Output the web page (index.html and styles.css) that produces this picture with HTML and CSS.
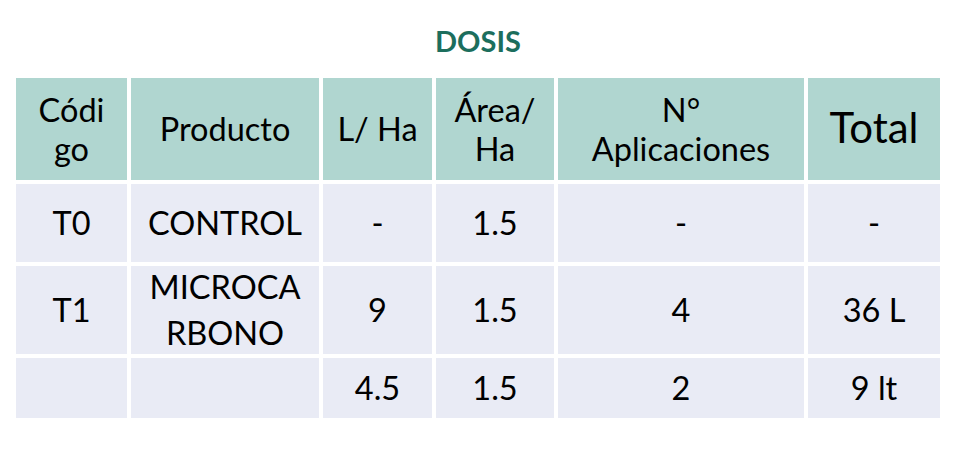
FILE: index.html
```html
<!DOCTYPE html>
<html lang="es">
<head>
<meta charset="utf-8">
<title>Dosis</title>
<link rel="stylesheet" href="styles.css">
</head>
<body>
<div class="page">
  <div class="title">DOSIS</div>
  <div class="grid">
    <div class="cell head">Códi<br>go</div>
    <div class="cell head">Producto</div>
    <div class="cell head">L/ Ha</div>
    <div class="cell head">Área/<br>Ha</div>
    <div class="cell head">N°<br>Aplicaciones</div>
    <div class="cell head big">Total</div>

    <div class="cell">T0</div>
    <div class="cell">CONTROL</div>
    <div class="cell">-</div>
    <div class="cell">1.5</div>
    <div class="cell">-</div>
    <div class="cell">-</div>

    <div class="cell">T1</div>
    <div class="cell tall">MICROCA<br>RBONO</div>
    <div class="cell">9</div>
    <div class="cell">1.5</div>
    <div class="cell">4</div>
    <div class="cell">36 L</div>

    <div class="cell"></div>
    <div class="cell"></div>
    <div class="cell">4.5</div>
    <div class="cell">1.5</div>
    <div class="cell">2</div>
    <div class="cell">9 lt</div>
  </div>
</div>
</body>
</html>
```

FILE: styles.css
```css
html, body {
  margin: 0;
  padding: 0;
  background: #ffffff;
}

.page {
  padding-left: 16px;
  width: 924px;
  font-family: Lato, "Open Sans", sans-serif;
  color: #000000;
}

.title {
  box-sizing: border-box;
  height: 78px;
  padding-top: 23px;
  line-height: 36px;
  font-size: 29px;
  font-weight: 700;
  color: #1c6e5d;
  text-align: center;
}

.grid {
  display: grid;
  grid-template-columns: 111px 188px 109px 118px 246px 132px;
  grid-template-rows: 102px 78px 88px 60px;
  gap: 4px;
}

.cell {
  box-sizing: border-box;
  display: flex;
  align-items: center;
  justify-content: center;
  text-align: center;
  padding-bottom: 1px;
  background: #e9ebf5;
  font-size: 32.5px;
  line-height: 39px;
}

.head {
  background: #b0d6d0;
}

.big {
  font-size: 42px;
  padding-bottom: 4px;
}

.tall {
  line-height: 46px;
}
```
